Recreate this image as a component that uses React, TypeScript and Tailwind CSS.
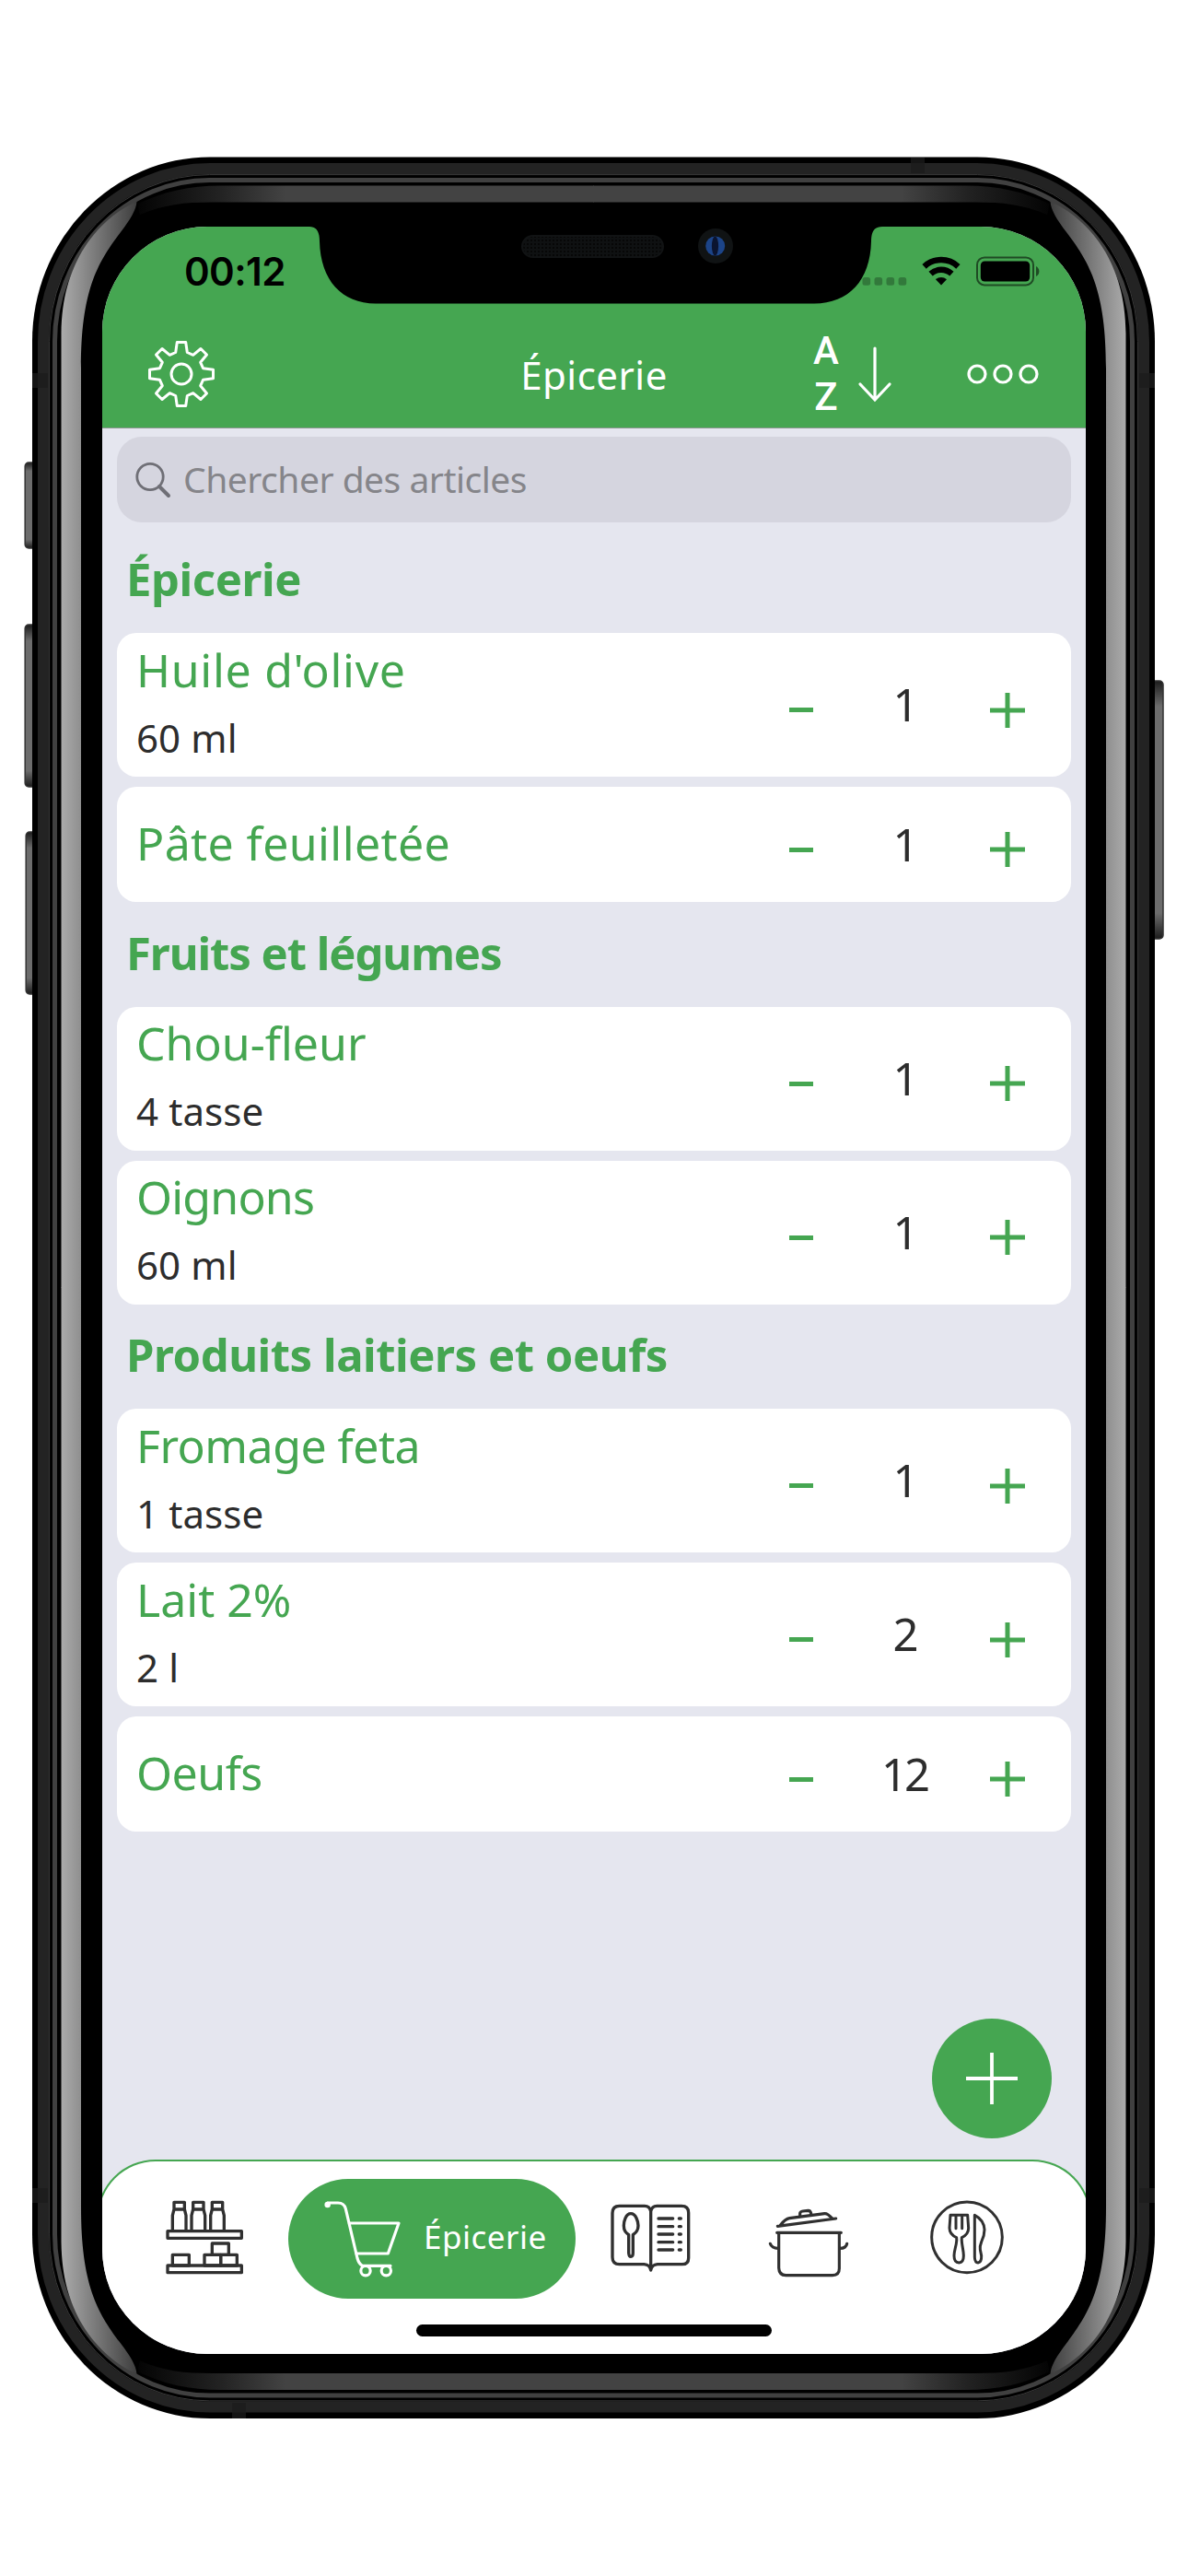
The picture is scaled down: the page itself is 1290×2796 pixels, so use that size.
import clsx from "clsx";

type Item = {
  name: string;
  tracking: string;
  amount?: string;
  count: number;
};

type Section = {
  title: string;
  tracking: string;
  items: Item[];
};

const SECTIONS: Section[] = [
  {
    title: "Épicerie",
    tracking: "tracking-[-0.4px]",
    items: [
      { name: "Huile d'olive", tracking: "tracking-[0.7px]", amount: "60 ml", count: 1 },
      { name: "Pâte feuilletée", tracking: "tracking-[0.4px]", count: 1 },
    ],
  },
  {
    title: "Fruits et légumes",
    tracking: "tracking-[-1.05px]",
    items: [
      { name: "Chou-fleur", tracking: "tracking-[0px]", amount: "4 tasse", count: 1 },
      { name: "Oignons", tracking: "tracking-[-0.8px]", amount: "60 ml", count: 1 },
    ],
  },
  {
    title: "Produits laitiers et oeufs",
    tracking: "tracking-[-0.45px]",
    items: [
      { name: "Fromage feta", tracking: "tracking-[-0.5px]", amount: "1 tasse", count: 1 },
      { name: "Lait 2%", tracking: "tracking-[0px]", amount: "2 l", count: 2 },
      { name: "Oeufs", tracking: "tracking-[-0.5px]", count: 12 },
    ],
  },
];

const GEAR_POINTS =
  "-4.7,-34.5 4.7,-34.5 6.3,-23.5 12.7,-20.7 21,-27.5 27.5,-21 20.7,-12.7 23.5,-6.3 34.5,-4.7 34.5,4.7 23.5,6.3 20.7,12.7 27.5,21 21,27.5 12.7,20.7 6.3,23.5 4.7,34.5 -4.7,34.5 -6.3,23.5 -12.7,20.7 -21,27.5 -27.5,21 -20.7,12.7 -23.5,6.3 -34.5,4.7 -34.5,-4.7 -23.5,-6.3 -20.7,-12.7 -27.5,-21 -21,-27.5 -12.7,-20.7 -6.3,-23.5";

const GearIcon = () => (
  <svg className="h-[74px] w-[74px]" viewBox="-37 -37 74 74" fill="none" stroke="white" strokeWidth="3">
    <polygon points={GEAR_POINTS} strokeLinejoin="round" />
    <circle r="11" />
  </svg>
);

const ArrowIcon = () => (
  <svg
    className="h-[62px] w-[38px]"
    viewBox="0 0 38 62"
    fill="none"
    stroke="white"
    strokeWidth="3.2"
    strokeLinecap="round"
  >
    <path d="M19 3V58M3 42L19 59L35 42" />
  </svg>
);

const MoreIcon = () => (
  <svg className="h-[22px] w-[78px]" viewBox="0 0 78 22" fill="none" stroke="white" strokeWidth="3.2">
    <circle cx="11" cy="11" r="9" />
    <circle cx="39" cy="11" r="9" />
    <circle cx="67" cy="11" r="9" />
  </svg>
);

const SearchIcon = () => (
  <svg className="h-[40px] w-[40px]" viewBox="0 0 40 40" fill="none" stroke="#6f6f76" strokeLinecap="round">
    <circle cx="17" cy="16.5" r="14.2" strokeWidth="2.8" />
    <path d="M27 27L37 37" strokeWidth="4" />
  </svg>
);

const StatusIcons = () => (
  <svg className="h-[34px] w-[194px]" viewBox="935 277 194 34">
    <g fill="black" fillOpacity="0.27">
      <rect x="936.5" y="301" width="8.6" height="8.8" rx="2.5" />
      <rect x="949.5" y="301" width="8.6" height="8.8" rx="2.5" />
      <rect x="962.5" y="301" width="8.6" height="8.8" rx="2.5" />
      <rect x="975.6" y="301" width="8.6" height="8.8" rx="2.5" />
    </g>
    <g fill="none" stroke="black" strokeWidth="6.4">
      <path d="M1003.6 289.3A27 27 0 0 1 1040.4 289.3" />
      <path d="M1010.6 297.1A17 17 0 0 1 1033.4 297.1" />
    </g>
    <path d="M1022 309.5L1016 303.2A9 9 0 0 1 1028 303.2Z" />
    <rect x="1061" y="279.4" width="61" height="30" rx="8" fill="none" stroke="black" strokeOpacity="0.55" strokeWidth="2" />
    <rect x="1064.8" y="283.5" width="53.4" height="22" rx="4.5" />
    <path d="M1125 289Q1128.4 291 1128.4 294.5Q1128.4 298 1125 300Z" fillOpacity="0.55" />
  </svg>
);

const ShelfIcon = () => (
  <svg className="h-[88px] w-[86px]" viewBox="88 48 258 264" fill="none" stroke="#303030" strokeWidth="10">
    {[0, 62, 124].map((x) => (
      <path
        key={x}
        transform={`translate(${x} 0)`}
        strokeLinejoin="round"
        d="M118 61H152V84H118ZM118 84L113 104V153M152 84L157 104V153"
      />
    ))}
    <g strokeLinejoin="round">
      <rect x="97" y="155" width="241" height="23" />
      <rect x="97" y="267" width="241" height="23" />
      <rect x="113" y="232" width="54" height="35" />
      <rect x="217" y="232" width="53" height="35" />
      <rect x="270" y="232" width="53" height="35" />
      <rect x="242" y="195" width="54" height="37" />
    </g>
  </svg>
);

const CartIcon = () => (
  <svg
    className="h-[88px] w-[86px]"
    viewBox="604 48 258 264"
    fill="none"
    stroke="white"
    strokeWidth="9.5"
    strokeLinecap="round"
    strokeLinejoin="round"
  >
    <circle cx="618" cy="69" r="5" fill="white" />
    <path d="M618 63H652Q672 63 677 82L715 243Q720 262 732 268H823" />
    <path d="M689 129H850L815 228H712" />
    <circle cx="742" cy="284" r="15.5" />
    <circle cx="809" cy="284" r="15.5" />
  </svg>
);

const BookIcon = () => (
  <svg
    className="h-[88px] w-[88px]"
    viewBox="66 48 264 264"
    fill="none"
    stroke="#303030"
    strokeWidth="10"
    strokeLinecap="round"
    strokeLinejoin="round"
  >
    <path d="M200 90Q196 73 180 73H98Q75 73 75 96V240Q75 263 98 263H178Q197 264 200 282Q203 264 222 263H302Q323 263 323 242V95Q323 73 300 73H220Q204 73 200 90V278" />
    <path d="M135 98C118 98 112 125 112 137C112 155 120 161 128 167V226Q129 238 135 238Q142 238 142 226V167C150 161 159 155 159 137C159 125 152 98 135 98Z" />
    {[114, 140, 165, 191, 216].map((y) => (
      <path key={y} d={`M225 ${y}H272M292 ${y}H298`} />
    ))}
  </svg>
);

const PotIcon = () => (
  <svg
    className="h-[88px] w-[88px]"
    viewBox="582 48 264 264"
    fill="none"
    stroke="#303030"
    strokeWidth="9.5"
    strokeLinecap="round"
    strokeLinejoin="round"
  >
    <path d="M613 139L803 114M622 136Q638 115 652 113L766 98Q776 97 790 113" />
    <path d="M686 107V97Q687 91 695 90L713 88Q720 88 722 97V102" />
    <path d="M611 160H820M617 160V275Q618 299 640 299H792Q814 299 814 277V160" />
    <path d="M589 196Q594 211 615 211M839 196Q836 211 816 211" />
  </svg>
);

const PlateIcon = () => (
  <svg
    className="h-[88px] w-[84px]"
    viewBox="1105 48 252 264"
    fill="none"
    stroke="#303030"
    strokeWidth="9"
    strokeLinejoin="round"
    strokeLinecap="round"
  >
    <circle cx="1231" cy="175" r="115" />
    <path d="M1177 103H1233L1236 145Q1236 166 1214 176C1212 195 1220 215 1220 235Q1220 258 1205 258Q1189 258 1189 235C1189 215 1200 195 1197 176Q1174 166 1174 145ZM1195 103V146M1215 103V146" />
    <path d="M1256 103V240Q1257 258 1267 258Q1279 256 1278 235L1274 215Q1272 205 1278 190Q1288 170 1288 150Q1286 118 1256 103Z" />
  </svg>
);

// One quarter of the chrome highlights, reflected for the other corners.
const Highlight = ({ transform }: { transform?: string }) => (
  <g transform={transform}>
    <path
      d="M66.5 1398V362C67 322 76 296 89 273C104 248 124 230 148.5 218.5C148 228 141 239 131 252C106 285 88 315 88 400V1398Z"
      fill="url(#side)"
    />
    <path d="M645 201.5H240C205 201.5 178 208 150 221C150 226 151 230 152 233C178 222 200 219.5 230 219.5H645Z" fill="url(#rail)" />
  </g>
);

const PhoneBody = () => (
  <svg className="absolute inset-0 h-[2796px] w-[1290px]" viewBox="0 0 1290 2796">
    <defs>
      <linearGradient id="side" gradientUnits="userSpaceOnUse" x1="66" y1="0" x2="150" y2="0">
        <stop offset="0" stopColor="#acacac" />
        <stop offset="0.26" stopColor="#8f8f8f" />
        <stop offset="1" stopColor="#3c3c3c" />
      </linearGradient>
      <linearGradient id="rail" gradientUnits="userSpaceOnUse" x1="150" y1="0" x2="310" y2="0">
        <stop offset="0" stopColor="#040404" />
        <stop offset="0.55" stopColor="#222222" />
        <stop offset="1" stopColor="#434343" />
      </linearGradient>
      <linearGradient id="key" x1="0" y1="0" x2="0" y2="1">
        <stop offset="0" stopColor="#1c1c1c" />
        <stop offset="0.1" stopColor="#6c6c6c" />
        <stop offset="0.9" stopColor="#6c6c6c" />
        <stop offset="1" stopColor="#1c1c1c" />
      </linearGradient>
    </defs>
    <g fill="url(#key)" stroke="#333333" strokeWidth="1.5">
      <rect x="27.2" y="502" width="14" height="93" rx="4" />
      <rect x="27.2" y="678" width="14" height="176" rx="4" />
      <rect x="28.2" y="903" width="14" height="176" rx="4" />
      <rect x="1248" y="739" width="15" height="280" rx="4" />
    </g>
    <rect x="35" y="170.5" width="1219" height="2454.5" rx="193" ry="200" fill="black" />
    <rect x="47" y="183" width="1195" height="2429.5" rx="181" ry="188" fill="none" stroke="#232323" strokeWidth="12" />
    <g fill="#1c1c1c" fillOpacity="0.75">
      <rect x="35" y="405" width="17" height="16" />
      <rect x="35" y="2375" width="17" height="16" />
      <rect x="1237" y="405" width="17" height="16" />
      <rect x="1237" y="2375" width="17" height="16" />
      <rect x="989" y="171" width="15" height="17" />
      <rect x="252" y="2608" width="15" height="17" />
    </g>
    <rect x="53.6" y="189.6" width="1181.8" height="2416.3" rx="174" ry="181" fill="none" stroke="#3a3a3a" strokeWidth="1" />
    <rect x="59.5" y="195.6" width="1170" height="2404.4" rx="168" ry="175" fill="none" stroke="#404040" strokeWidth="5" />
    <Highlight />
    <Highlight transform="translate(1289 0) scale(-1 1)" />
    <Highlight transform="translate(0 2795.5) scale(1 -1)" />
    <Highlight transform="translate(1289 2795.5) scale(-1 -1)" />
  </svg>
);

const Notch = () => (
  <svg className="absolute left-[336px] top-[244px] h-[88px] w-[622px]" viewBox="336 244 622 88">
    <defs>
      <pattern id="mesh" width="4" height="4" patternUnits="userSpaceOnUse">
        <rect width="4" height="4" fill="#0f1112" />
        <rect width="2" height="2" fill="#070707" />
      </pattern>
    </defs>
    <path d="M336 244V246C344 246 347 252 347 262C348 304 371 329.5 408 329.5H884C922 329.5 945 304 946 262C946 252 949 246 958 246V244Z" />
    <rect x="567" y="256" width="153" height="23" rx="11.5" fill="url(#mesh)" stroke="#111314" strokeWidth="2" />
    <circle cx="777" cy="267" r="19" fill="#101314" />
    <circle cx="776.7" cy="267" r="10.5" fill="#1c4488" />
    <ellipse cx="776.5" cy="267" rx="3.6" ry="10.5" fill="#0b1430" />
  </svg>
);

const Header = () => (
  <header className="flex h-[219px] shrink-0 flex-col border-b border-[#87988d] bg-[#45a651]">
    <div className="flex h-[102px] items-start justify-between pl-[89px] pr-[50px] text-black">
      <span className="pt-[25px] font-[Inter] text-[42px] font-semibold leading-[48px] tracking-[-0.6px]">00:12</span>
      <div className="pt-[31px]">
        <StatusIcons />
      </div>
    </div>
    <div className="grid flex-1 grid-cols-3 items-center text-white">
      <div className="pl-[49px]">
        <GearIcon />
      </div>
      <h1 className="pt-[1px] text-center text-[42px] leading-[58px] tracking-[0.5px]">Épicerie</h1>
      <div className="flex items-center justify-end pr-[51px]">
        <div className="flex w-[28px] flex-col items-center font-[Roboto] text-[42px] font-medium leading-[50px]">
          <span>A</span>
          <span>Z</span>
        </div>
        <div className="ml-[20px]">
          <ArrowIcon />
        </div>
        <div className="ml-[81px]">
          <MoreIcon />
        </div>
      </div>
    </div>
  </header>
);

const ItemCard = ({ name, tracking, amount, count }: Item) => (
  <li
    className={clsx(
      "flex items-center rounded-[21px] bg-white pl-[21px] pr-[28px]",
      amount ? "h-[156px]" : "h-[125px]"
    )}
  >
    <div className={clsx("flex flex-1 flex-col", amount ? "gap-[19px] pb-[8px]" : "pb-[4px]")}>
      <span className={clsx("text-[50px] leading-[60px] text-[#45a651]", tracking)}>{name}</span>
      {amount && <span className="text-[42px] leading-[50px] tracking-[0.1px]">{amount}</span>}
    </div>
    <button className="mt-[11px] flex w-[82px] justify-center">
      <span className="h-[5px] w-[26px] bg-[#45a651]" />
    </button>
    <span className="w-[142px] pb-[2px] text-center text-[49px] leading-[60px] tracking-[-3px]">{count}</span>
    <button className="mt-[11px] flex w-[82px] justify-center">
      <svg className="h-[38px] w-[38px]" viewBox="0 0 38 38" stroke="#45a651" strokeWidth="5">
        <path d="M19 0V38M0 19H38" />
      </svg>
    </button>
  </li>
);

const TabBar = () => (
  <nav className="-mx-[6px] flex h-[211px] shrink-0 flex-col rounded-t-[64px] border-2 border-b-0 border-[#45a651] bg-white">
    <div className="mt-[19px] flex h-[130px] items-center pl-[72px]">
      <ShelfIcon />
      <div className="ml-[48px] flex h-[130px] w-[312px] items-center rounded-full bg-[#45a651] pl-[38px] text-white">
        <CartIcon />
        <span className="ml-[23px] pb-[4px] text-[35px] leading-[50px] tracking-[0.5px]">Épicerie</span>
      </div>
      <div className="ml-[37px]">
        <BookIcon />
      </div>
      <div className="ml-[84px]">
        <PotIcon />
      </div>
      <div className="ml-[86px]">
        <PlateIcon />
      </div>
    </div>
    <div className="mx-auto mt-[28px] h-[13px] w-[386px] rounded-full bg-black" />
  </nav>
);

const App = () => {
  return (
    <div className="relative h-[2796px] w-[1290px] overflow-hidden bg-white pl-[111px] pt-[246px] font-['Noto_Sans',sans-serif] text-[#2d2d2d]">
      <PhoneBody />
      <div className="relative flex h-[2309px] w-[1068px] flex-col overflow-hidden rounded-[114px] bg-[#e5e6ef]">
        <Header />
        <main className="flex-1 px-[16px] pt-[9px]">
          <div className="flex h-[93px] items-center gap-[13px] rounded-[27px] bg-[#d5d5df] pl-[19px]">
            <SearchIcon />
            <span className="pb-[2px] text-[39px] leading-[50px] tracking-[-0.5px] text-[#85858a]">
              Chercher des articles
            </span>
          </div>
          <div className="mt-[6.5px]">
            {SECTIONS.map((section) => (
              <section key={section.title}>
                <h2
                  className={clsx(
                    "flex h-[113.5px] items-center pb-[3px] pl-[10px] text-[49px] font-bold text-[#45a651]",
                    section.tracking
                  )}
                >
                  {section.title}
                </h2>
                <ul className="flex flex-col gap-[11px]">
                  {section.items.map((item) => (
                    <ItemCard key={item.name} {...item} />
                  ))}
                </ul>
              </section>
            ))}
          </div>
        </main>
        <TabBar />
        <button className="absolute left-[901px] top-[1945px] flex h-[130px] w-[130px] items-center justify-center rounded-full bg-[#45a651]">
          <svg className="h-[56px] w-[56px]" viewBox="0 0 56 56" stroke="white" strokeWidth="3.8">
            <path d="M28 0V56M0 28H56" />
          </svg>
        </button>
      </div>
      <Notch />
    </div>
  );
};

export default App;
